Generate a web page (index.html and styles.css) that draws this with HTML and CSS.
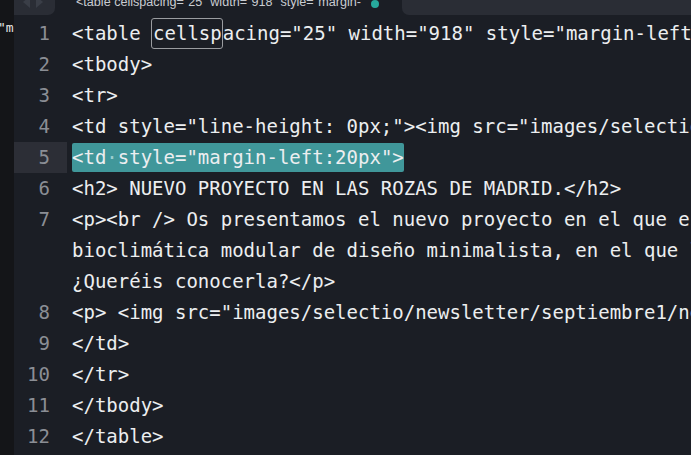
FILE: index.html
```html
<!DOCTYPE html>
<html lang="es">

<head>
    <meta charset="UTF-8">
    <title>index.html</title>
    <link rel="stylesheet" href="styles.css">
</head>

<body>
<div class="window">
    <div class="side">
        <span class="side-text">"m</span>
    </div>
    <div class="main">
        <div class="tabbar">
            <div class="nav">
                <span class="arrow left"></span>
                <span class="arrow right"></span>
            </div>
            <div class="tab">
                <span class="tab-title">&lt;table cellspacing="25" width="918" style="margin-</span>
                <span class="dot"></span>
            </div>
            <div class="rest"></div>
        </div>

        <div class="editor">
            <div class="line"><span class="num">1</span><span class="code">&lt;table <span class="find">cellsp</span>acing="25" width="918" style="margin-left:20px; margin-top:10px;"&gt;</span></div>
            <div class="line"><span class="num">2</span><span class="code">&lt;tbody&gt;</span></div>
            <div class="line"><span class="num">3</span><span class="code">&lt;tr&gt;</span></div>
            <div class="line"><span class="num">4</span><span class="code">&lt;td style="line-height: 0px;"&gt;&lt;img src="images/selectio/newsletter/septiembre1/foto.jpg" /&gt;&lt;/td&gt;</span></div>
            <div class="line current"><span class="num">5</span><span class="code"><span class="sel">&lt;td<span class="ws">·</span>style="margin-left:20px"&gt;</span></span></div>
            <div class="line"><span class="num">6</span><span class="code">&lt;h2&gt; NUEVO PROYECTO EN LAS ROZAS DE MADRID.&lt;/h2&gt;</span></div>
            <div class="line"><span class="num">7</span><span class="code">&lt;p&gt;&lt;br /&gt; Os presentamos el nuevo proyecto en el que estamos trabajando, una vivienda</span></div>
            <div class="line"><span class="num"></span><span class="code">bioclimática modular de diseño minimalista, en el que la luz es protagonista.</span></div>
            <div class="line"><span class="num"></span><span class="code">¿Queréis conocerla?&lt;/p&gt;</span></div>
            <div class="line"><span class="num">8</span><span class="code">&lt;p&gt; &lt;img src="images/selectio/newsletter/septiembre1/newsletter.jpg" /&gt;&lt;/p&gt;</span></div>
            <div class="line"><span class="num">9</span><span class="code">&lt;/td&gt;</span></div>
            <div class="line"><span class="num">10</span><span class="code">&lt;/tr&gt;</span></div>
            <div class="line"><span class="num">11</span><span class="code">&lt;/tbody&gt;</span></div>
            <div class="line"><span class="num">12</span><span class="code">&lt;/table&gt;</span></div>
        </div>
    </div>
</div>
</body>

</html>
```

FILE: styles.css
```css
* {
    margin: 0;
    padding: 0;
    box-sizing: border-box;
}

body {
    width: 691px;
    height: 455px;
    overflow: hidden;
    background: #1b1e25;
}

.window {
    display: flex;
    height: 455px;
}

/* 左边那一条是另一个窗格露出来的部分 */
.side {
    width: 14px;
    flex-shrink: 0;
    background: #141518;
    overflow: hidden;
    padding-top: 20px;
}

.side-text {
    display: block;
    margin-left: -2px;
    color: #e6e6e6;
    font: 13px "DejaVu Sans Mono", monospace;
    white-space: nowrap;
}

.main {
    flex: 1;
    min-width: 0;
    background: #1b1e25;
}

/* 标签栏 */
.tabbar {
    display: flex;
    height: 15px;
    background: #1b1e25;
}

.nav {
    width: 41px;
    background: #2a2d35;
    border-bottom-right-radius: 7px;
    display: flex;
    gap: 6px;
    padding-left: 9px;
}

.arrow {
    width: 0;
    height: 0;
    margin-top: -4px;
    border-top: 6px solid transparent;
    border-bottom: 6px solid transparent;
}

.arrow.left {
    border-right: 7px solid #3a3e47;
}

.arrow.right {
    border-left: 7px solid #3a3e47;
}

.tab {
    width: 347px;
    display: flex;
    align-items: flex-start;
    padding-left: 21px;
    overflow: hidden;
}

.tab-title {
    margin-top: -4px;
    color: #c9ccd1;
    font: 12.6px/1 "Liberation Sans", Arial, sans-serif;
    white-space: nowrap;
}

.dot {
    width: 8px;
    height: 8px;
    margin-left: 10px;
    border-radius: 50%;
    background: #27a99c;
    flex-shrink: 0;
}

.rest {
    flex: 1;
    background: #2a2d35;
    border-bottom-left-radius: 7px;
}

/* 代码区 */
.editor {
    padding-top: 3px;
    font: 19px/31px "DejaVu Sans Mono", monospace;
}

.line {
    display: flex;
    height: 31px;
    white-space: pre;
}

.num {
    width: 53px;
    flex-shrink: 0;
    padding-right: 17px;
    text-align: right;
    color: #8b8e95;
}

.current .num {
    background: #2c2e36;
}

.code {
    margin-left: 5px;
    color: #eceef0;
}

.find {
    display: inline-block;
    height: 31px;
    margin-left: -1px;
    padding-left: 1px;
    border: 1px solid #9a9ca0;
    border-radius: 3px;
    line-height: 29px;
}

.sel {
    display: inline-block;
    height: 29px;
    margin-top: 1px;
    line-height: 29px;
    background: #40979a;
    border-radius: 2px;
}

.ws {
    color: #9ccfd0;
}
```
